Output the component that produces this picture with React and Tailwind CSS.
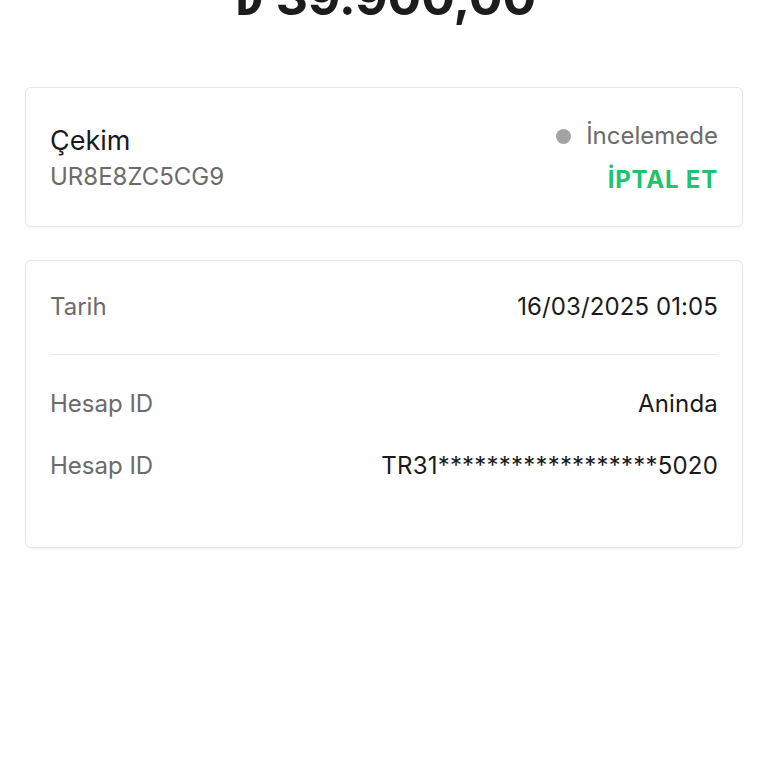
const rows = [
  { label: "Hesap ID", value: "Aninda" },
  { label: "Hesap ID", value: "TR31******************5020" },
];

const App = () => (
  <div className="min-h-[768px] bg-white px-[25px] font-['Inter',sans-serif] overflow-hidden">
    <h1 className="-mt-[28px] text-center text-[50px] font-bold leading-none text-[#1c1c1c]">
      ₺ 39.900,00
    </h1>

    <div className="mt-[65px] flex items-center justify-between rounded-md border border-[#e6e6e6] px-[24px] pt-[33px] pb-[31px] shadow-[0_1px_2px_rgba(0,0,0,0.05)]">
      <div>
        <p className="text-[27px] leading-[32px] text-[#1a1a1a]">Çekim</p>
        <p className="mt-[5px] text-[24px] leading-[30px] text-[#6b6b6b]">UR8E8ZC5CG9</p>
      </div>
      <div className="flex flex-col items-end">
        <div className="flex items-center gap-[15px]">
          <span className="h-[15px] w-[15px] rounded-full bg-[#a3a3a3]" />
          <span className="text-[24px] leading-[30px] text-[#6b6b6b]">İncelemede</span>
        </div>
        <button className="mt-[14px] text-[24px] font-bold leading-[30px] tracking-[0.8px] text-[#1cc46b]">İPTAL ET</button>
      </div>
    </div>

    <div className="mt-[33px] rounded-md border border-[#e6e6e6] px-[24px] pt-[31px] pb-[66px] shadow-[0_1px_2px_rgba(0,0,0,0.05)]">
      <div className="flex items-center justify-between pb-[32px] border-b border-[#e8e8e8]">
        <span className="text-[24px] leading-[30px] text-[#6b6b6b]">Tarih</span>
        <span className="text-[24px] leading-[30px] tracking-[0.1px] text-[#1a1a1a]">16/03/2025 01:05</span>
      </div>
      <div className="flex flex-col gap-[32px] pt-[34px]">
        {rows.map((row, i) => (
          <div key={i} className="flex items-center justify-between">
            <span className="text-[24px] leading-[30px] text-[#6b6b6b]">{row.label}</span>
            <span className="text-[24px] leading-[30px] tracking-[0.2px] text-[#1a1a1a]">{row.value}</span>
          </div>
        ))}
      </div>
    </div>
  </div>
);

export default App;
